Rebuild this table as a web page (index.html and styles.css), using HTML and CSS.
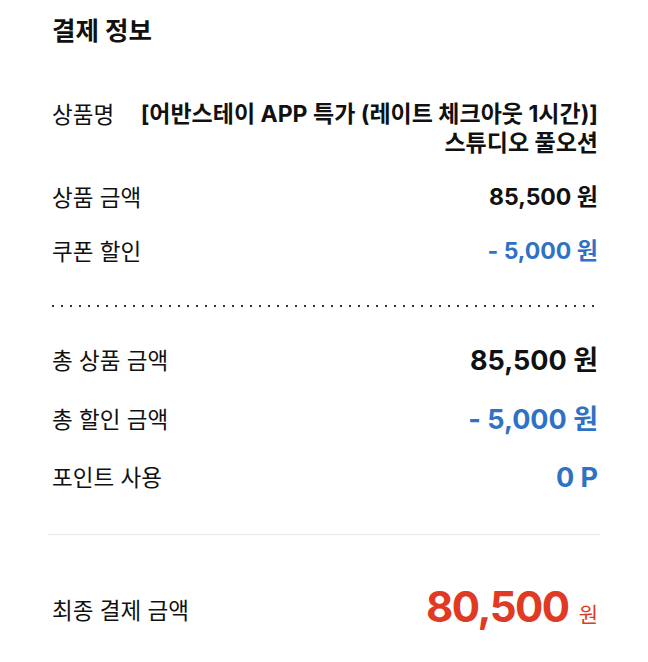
FILE: index.html
```html
<!DOCTYPE html>
<html lang="ko">
<head>
<meta charset="utf-8">
<link rel="stylesheet" href="styles.css">
</head>
<body>
<main class="pay">
  <h1 class="title">결제 정보</h1>
  <section class="group first">
    <div class="row">
      <span class="label">상품명</span>
      <span class="value name">[어반스테이 APP 특가 (레이트 체크아웃 1시간)]<br>스튜디오 풀오션</span>
    </div>
    <div class="row">
      <span class="label">상품 금액</span>
      <span class="value">85,500 원</span>
    </div>
    <div class="row">
      <span class="label">쿠폰 할인</span>
      <span class="value blue">- 5,000 원</span>
    </div>
  </section>
  <div class="dots"></div>
  <section class="group totals">
    <div class="row">
      <span class="label">총 상품 금액</span>
      <span class="value big">85,500 원</span>
    </div>
    <div class="row">
      <span class="label">총 할인 금액</span>
      <span class="value big blue">- 5,000 원</span>
    </div>
    <div class="row">
      <span class="label">포인트 사용</span>
      <span class="value big blue">0 P</span>
    </div>
  </section>
  <hr class="rule">
  <div class="final">
    <span class="label">최종 결제 금액</span>
    <span class="final-value"><span class="amount">80,500</span><span class="won">원</span></span>
  </div>
</main>
</body>
</html>
```
FILE: styles.css
```css
* { box-sizing: border-box; }
html, body { margin: 0; padding: 0; background: #fff; }
body {
  font-family: Inter, "Noto Sans CJK KR", "Noto Sans", sans-serif;
  color: #111;
}
.pay { padding: 15px 50px 0 52px; }
.title {
  margin: 0;
  font-size: 25.5px;
  line-height: 32px;
  font-weight: 700;
}
.group { display: flex; flex-direction: column; }
.group.first { margin-top: 53px; gap: 25px; }
.group.totals { margin-top: 39px; gap: 29.5px; }
.row {
  display: flex;
  justify-content: space-between;
  align-items: flex-start;
  font-size: 22.5px;
  line-height: 29px;
}
.label { font-weight: 400; white-space: nowrap; }
.value { font-weight: 700; text-align: right; font-size: 23px; }
.value.big { font-size: 27px; }
.blue { color: #2f72c5; }
.dots {
  margin-top: 39px;
  height: 2px;
  margin-right: 4px;
  background-image: linear-gradient(to right, #333 2px, transparent 2px);
  background-size: 9px 2px;
  background-repeat: repeat-x;
}
.rule {
  margin: 42px -2px 0 -4px;
  border: 0;
  height: 1px;
  background: #e8e8e8;
}
.final {
  margin-top: 50px;
  display: flex;
  justify-content: space-between;
  align-items: center;
  font-size: 22.5px;
  line-height: 44px;
}
.final-value { display: flex; align-items: baseline; color: #e03a25; }
.amount { font-size: 42px; font-weight: 700; letter-spacing: -1.5px; }
.won { font-size: 21px; margin-left: 10px; }
```
